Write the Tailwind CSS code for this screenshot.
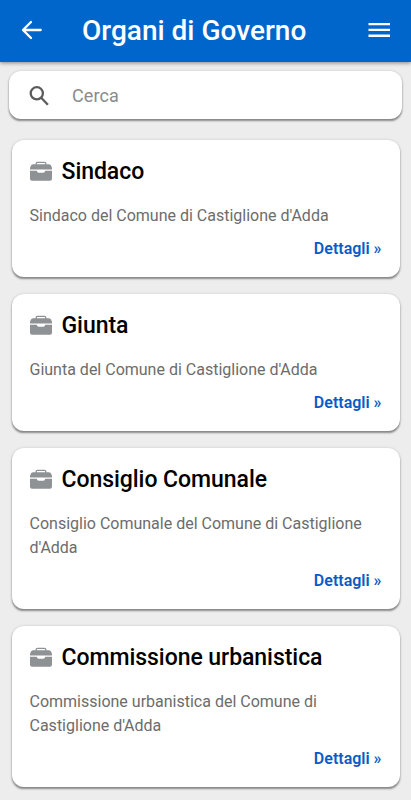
<!DOCTYPE html>
<html lang="it">
<head>
  <meta charset="UTF-8"/>
  <meta name="viewport" content="width=device-width, initial-scale=1"/>
  <script src="https://cdn.jsdelivr.net/npm/@tailwindcss/browser@4"></script>
  <title>Organi di Governo</title>
</head>
<body class="h-screen overflow-hidden bg-[#ededed] font-[Roboto,sans-serif]">
  <!-- Shared icon -->
  <svg class="hidden">
    <symbol id="briefcase" viewBox="0 0 22 20">
      <path d="M6.2 4V2.600Q6.2 1.300 7.500 1.300h7Q15.800 1.300 15.800 2.600V4" fill="none" stroke="currentColor" stroke-width="1.300"/>
      <path d="M3 3.200h16Q20.600 3.200 21.300 5L22 7V8.500H0V7L0.700 5Q1.400 3.200 3 3.200z" fill="currentColor"/>
      <path d="M0 9.700h6.700q.5 2 2 2h4.600q1.500 0 2-2H22v8q0 2-2 2H2q-2 0-2-2z" fill="currentColor"/>
    </symbol>
  </svg>

  <!-- Top bar -->
  <header class="flex h-[61.500px] items-center bg-[#0066cc] pr-[19px] pl-[19px] text-white shadow-[0_1px_4px_rgba(0,0,0,0.45)]">
    <a href="#" aria-label="Indietro" class="-mt-[2px]">
      <svg class="size-[26px]" viewBox="0 0 26 26" fill="none" stroke="currentColor" stroke-width="2.300" stroke-linecap="round" stroke-linejoin="round">
        <path d="M21.700 13H4.300M12 5L4 13l8 8"/>
      </svg>
    </a>
    <h1 class="ml-[37px] flex-1 text-[28px] font-medium whitespace-nowrap">Organi di Governo</h1>
    <button aria-label="Menu" class="-mt-[2px]">
      <svg class="h-[22px] w-[26px]" viewBox="0 0 26 22" fill="currentColor">
        <path d="M2.500 4h21.500v2.300H2.500zM2.500 9.800h21.500v2.300H2.500zM2.500 15.600h21.500v2.300H2.500z"/>
      </svg>
    </button>
  </header>

  <!-- Search -->
  <div class="mt-[9px] mr-[9px] ml-[9px] flex h-12 items-center rounded-[12px] bg-white pl-5 shadow-[0_2px_2px_-0.5px_rgba(0,0,0,0.4),0_0_3px_rgba(0,0,0,0.15)]">
    <svg class="mt-[2px] size-5 text-[#5b5b5b]" viewBox="0 0 20 20" fill="none" stroke="currentColor" stroke-width="2.300">
      <circle cx="7.800" cy="7.300" r="6.100"/>
      <path d="M12.200 11.700l6.700 7"/>
    </svg>
    <span class="mt-px ml-[23px] text-[18px] tracking-[0.100px] text-[#8b8b8b]">Cerca</span>
  </div>

  <!-- Cards -->
  <main class="mt-[21px] mr-[11.500px] ml-[11.500px] flex flex-col gap-[17.300px]">
    <article class="rounded-[12px] bg-white px-[18px] pb-[16px] shadow-[0_2px_2px_-0.5px_rgba(0,0,0,0.4),0_0_3px_rgba(0,0,0,0.15)]">
      <h2 class="flex items-center pt-[16px] text-[23px] leading-8 font-medium tracking-[-0.050px] text-black"><svg class="-mt-[2px] mr-[10px] h-5 w-[22px] text-[#8f9295]"><use href="#briefcase"/></svg>Sindaco</h2>
      <p class="mt-[16px] text-[16px] leading-6 text-[#6c6c6c]">Sindaco del Comune di Castiglione d'Adda</p>
      <a href="#" class="mt-[9px] block text-right text-[16px] leading-6 font-semibold text-[#0a5bc6]">Dettagli »</a>
    </article>
    <article class="rounded-[12px] bg-white px-[18px] pb-[16px] shadow-[0_2px_2px_-0.5px_rgba(0,0,0,0.4),0_0_3px_rgba(0,0,0,0.15)]">
      <h2 class="flex items-center pt-[16px] text-[23px] leading-8 font-medium tracking-[-0.050px] text-black"><svg class="-mt-[2px] mr-[10px] h-5 w-[22px] text-[#8f9295]"><use href="#briefcase"/></svg>Giunta</h2>
      <p class="mt-[16px] text-[16px] leading-6 text-[#6c6c6c]">Giunta del Comune di Castiglione d'Adda</p>
      <a href="#" class="mt-[9px] block text-right text-[16px] leading-6 font-semibold text-[#0a5bc6]">Dettagli »</a>
    </article>
    <article class="rounded-[12px] bg-white px-[18px] pb-[16px] shadow-[0_2px_2px_-0.5px_rgba(0,0,0,0.4),0_0_3px_rgba(0,0,0,0.15)]">
      <h2 class="flex items-center pt-[16px] text-[23px] leading-8 font-medium tracking-[-0.050px] text-black"><svg class="-mt-[2px] mr-[10px] h-5 w-[22px] text-[#8f9295]"><use href="#briefcase"/></svg>Consiglio Comunale</h2>
      <p class="mt-[16px] text-[16px] leading-6 text-[#6c6c6c]">Consiglio Comunale del Comune di Castiglione d'Adda</p>
      <a href="#" class="mt-[9px] block text-right text-[16px] leading-6 font-semibold text-[#0a5bc6]">Dettagli »</a>
    </article>
    <article class="rounded-[12px] bg-white px-[18px] pb-[16px] shadow-[0_2px_2px_-0.5px_rgba(0,0,0,0.4),0_0_3px_rgba(0,0,0,0.15)]">
      <h2 class="flex items-center pt-[16px] text-[23px] leading-8 font-medium tracking-[-0.050px] text-black"><svg class="-mt-[2px] mr-[10px] h-5 w-[22px] text-[#8f9295]"><use href="#briefcase"/></svg>Commissione urbanistica</h2>
      <p class="mt-[16px] text-[16px] leading-6 text-[#6c6c6c]">Commissione urbanistica del Comune di Castiglione d'Adda</p>
      <a href="#" class="mt-[9px] block text-right text-[16px] leading-6 font-semibold text-[#0a5bc6]">Dettagli »</a>
    </article>
  </main>
</body>
</html>
